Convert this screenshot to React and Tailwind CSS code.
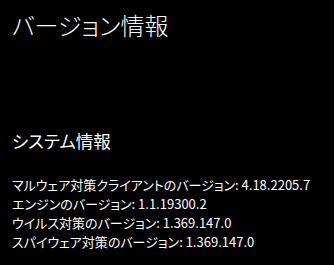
export default function App() {
  return (
    <div
      className="w-[334px] h-[265px] bg-black text-white overflow-hidden"
      style={{ fontFamily: '"Noto Sans CJK JP", "Noto Sans", sans-serif', fontFeatureSettings: '"palt"' }}
    >
      <div className="pl-[12px] pt-[9px]">
        <h1 className="text-[24px] leading-[32px] font-light">バージョン情報</h1>
        <h2 className="mt-[88px] text-[17.5px] leading-[24px] font-normal">システム情報</h2>
        <div className="mt-[22px] text-[13px] leading-[19px]">
          <div>マルウェア対策クライアントのバージョン: 4.18.2205.7</div>
          <div>エンジンのバージョン: 1.1.19300.2</div>
          <div>ウイルス対策のバージョン: 1.369.147.0</div>
          <div>スパイウェア対策のバージョン: 1.369.147.0</div>
        </div>
      </div>
    </div>
  );
}
